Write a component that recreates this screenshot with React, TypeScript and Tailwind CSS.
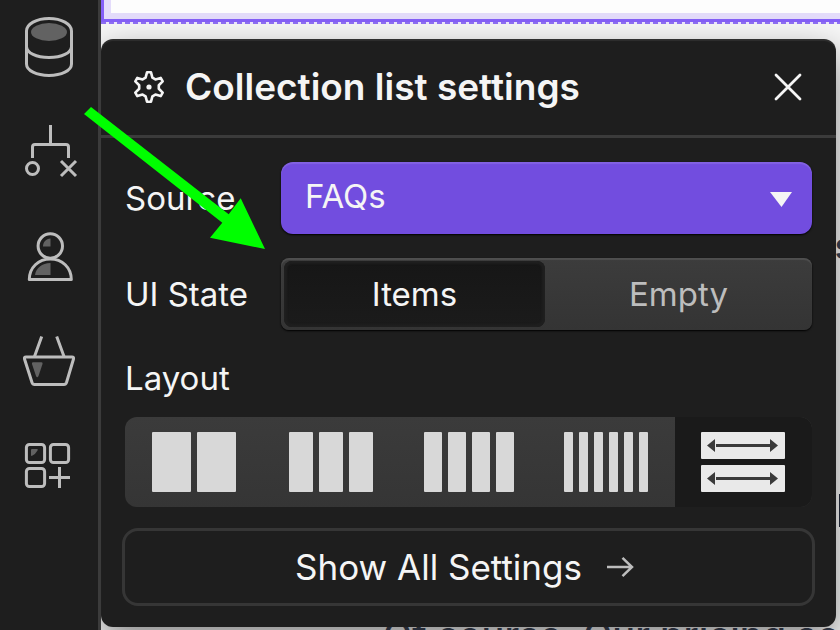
import { useState } from 'react';
import type { ReactNode } from 'react';

interface LayoutOption {
  id: string;
  label: string;
  icon: ReactNode;
}

function Columns({ count, width, total }: { count: number; width: number; total: number }) {
  return (
    <svg width={total} height="60" viewBox={`0 0 ${total} 60`} fill="#d8d8d8" aria-hidden="true">
      {Array.from({ length: count }, (_, i) => (
        <rect key={i} x={i * (width + 6)} width={width} height="60" rx="1" />
      ))}
    </svg>
  );
}

function Rows() {
  return (
    <svg width="84" height="60" viewBox="0 0 84 60" aria-hidden="true">
      {[0, 33].map(y => (
        <g key={y} transform={`translate(0 ${y})`}>
          <rect width="84" height="27" rx="1" fill="#e9e9e9" />
          <path d="M15 13.5H69" stroke="#3a3a3a" strokeWidth="3" />
          <path d="M14 7V20L6 13.5ZM69 7V20L77 13.5Z" fill="#3a3a3a" />
        </g>
      ))}
    </svg>
  );
}

const layouts: LayoutOption[] = [
  { id: 'two', label: 'Two columns', icon: <Columns count={2} width={39} total={84} /> },
  { id: 'three', label: 'Three columns', icon: <Columns count={3} width={24} total={84} /> },
  { id: 'four', label: 'Four columns', icon: <Columns count={4} width={18} total={90} /> },
  { id: 'six', label: 'Six columns', icon: <Columns count={6} width={9} total={84} /> },
  { id: 'rows', label: 'Rows', icon: <Rows /> },
];

const tools = [
  {
    label: 'CMS',
    icon: (
      <>
        <ellipse cx="30" cy="15" rx="18" ry="9" fill="#626262" stroke="none" />
        <path d="M7.5 14C7.5 7 17.5 1.5 30 1.5S52.5 7 52.5 14V47C52.5 53.5 42.5 58.5 30 58.5S7.5 53.5 7.5 47Z" />
        <path d="M7.5 29.5C7.5 36 17.5 40.5 30 40.5S52.5 36 52.5 29.5" />
      </>
    ),
  },
  {
    label: 'Logic',
    icon: (
      <>
        <path d="M31.5 3V22.5M13.5 36V25Q13.5 22.5 16 22.5H47Q49.5 22.5 49.5 25V36" />
        <circle cx="13.5" cy="46.5" r="6" />
        <path d="M42 39L57 54M57 39L42 54" />
      </>
    ),
  },
  {
    label: 'Users',
    icon: (
      <>
        <path d="M31.5 11.5V19.5H24C24 15 27 12 31.5 11.5ZM31.5 36V48H16C17 41 23 36 31.5 36Z" fill="#626262" stroke="none" />
        <circle cx="31.3" cy="19" r="12.2" />
        <path d="M10.3 52.6C10.3 40.5 19.5 32 31.3 32S52.3 40.5 52.3 52.6Z" />
      </>
    ),
  },
  {
    label: 'Ecommerce',
    icon: (
      <>
        <path d="M14 30.3H22.5Q24 30.3 23.5 32L19.5 44Q18.2 46.5 17 44L13 32Q12.5 30.3 14 30.3Z" fill="#626262" stroke="none" />
        <path d="M22.7 4.5L15.5 24.5M37.7 4.5L45 24.5" />
        <path d="M7 25H53Q55 25 54.5 27L47.5 50.5Q46.8 52.5 45 52.5H15.5Q13.7 52.5 13 50.5L5.5 27Q5 25 7 25Z" />
      </>
    ),
  },
  {
    label: 'Apps',
    icon: (
      <>
        <path d="M12 13Q12 12 13 12H18Q19.5 12 18.5 13.5Q16.5 17 13.5 18.5Q12 19.5 12 18Z" fill="#626262" stroke="none" />
        <rect x="7.4" y="7.4" width="18.2" height="18.2" rx="3" />
        <rect x="31.4" y="7.4" width="18.2" height="18.2" rx="3" />
        <rect x="7.4" y="31.4" width="18.2" height="18.2" rx="3" />
        <path d="M40.5 30V51M30 40.5H51" />
      </>
    ),
  },
];

function Sidebar() {
  return (
    <nav className="relative z-10 flex shrink-0 flex-col gap-[45px] border-r-3 border-[#3b3b3b] bg-[#1e1e1e] px-[19px] pt-[17px]">
      {tools.map(tool => (
        <button key={tool.label} type="button" aria-label={tool.label}>
          <svg width="60" height="60" viewBox="0 0 60 60" fill="none" stroke="#bdbdbd" strokeWidth="3" strokeLinejoin="round">
            {tool.icon}
          </svg>
        </button>
      ))}
    </nav>
  );
}

// Page being edited, mostly hidden behind the settings panel
function Canvas() {
  return (
    <div className="absolute inset-0 overflow-hidden bg-[#f7f7f7] text-[#3a4254]">
      <div className="h-[22px] border-b-3 border-l-3 border-[#8560f8] bg-[#e4dcfb] pb-[6px] pl-[7px]">
        <div className="h-full bg-[#fdfdfd]" />
      </div>
      <div className="h-[2px] bg-[repeating-linear-gradient(90deg,#8f6ff5_0_5px,#eee9fc_5px_8px)]" />
      <p className="absolute top-[222px] -right-[14px] text-[36px] leading-[48px] font-medium">s</p>
      <div className="absolute top-[494px] right-0 h-[33px] w-px bg-[#232a3a]" />
      <p className="absolute top-[611px] left-[282px] text-[38px] leading-[48px] font-medium whitespace-nowrap">
        Of course. Our pricing scales
      </p>
    </div>
  );
}

function SettingsPanel() {
  const [source, setSource] = useState('FAQs');
  const [uiState, setUiState] = useState('Items');
  const [layout, setLayout] = useState('rows');

  return (
    <section className="relative mt-[39px] mr-1 rounded-xl bg-[#1e1e1e] text-[33px] leading-[48px] text-[#f5f5f5] shadow-[0_14px_36px_rgba(0,0,0,0.45),inset_0_2px_1px_rgba(255,255,255,0.08)]">
      <header className="flex h-[99px] items-center border-b-3 border-[#3b3b3b] px-8">
        <svg width="32" height="34" viewBox="-16 -17 32 34" fill="none" stroke="#f5f5f5" strokeWidth="2.6" strokeLinejoin="round" aria-hidden="true">
          <path d="M-2 -14.7H2L3.4 -9.4L6.4 -7.6L11.7 -9.1L13.7 -5.6L9.8 -1.8V1.8L13.7 5.6L11.7 9.1L6.4 7.6L3.4 9.4L2 14.7H-2L-3.4 9.4L-6.4 7.6L-11.7 9.1L-13.7 5.6L-9.8 1.8V-1.8L-13.7 -5.6L-11.7 -9.1L-6.4 -7.6L-3.4 -9.4Z" />
          <circle r="2.6" fill="#f5f5f5" stroke="none" />
        </svg>
        <h2 className="ml-5 flex-1 text-[37px] font-semibold">Collection list settings</h2>
        <button type="button" aria-label="Close">
          <svg width="32" height="32" viewBox="0 0 32 32" stroke="#f5f5f5" strokeWidth="2.8" strokeLinecap="round">
            <path d="M4 4L28 28M28 4L4 28" />
          </svg>
        </button>
      </header>

      <div className="flex flex-col gap-6 px-6 pt-6">
        <div className="flex items-center">
          <label htmlFor="source" className="w-[156px]">Source</label>
          <div className="relative flex-1">
            <select
              id="source"
              value={source}
              onChange={e => setSource(e.target.value)}
              className="block h-[72px] w-full appearance-none rounded-xl bg-[#724ddf] px-6 pb-1 shadow-[0_1px_2px_#000,inset_0_2px_1px_rgba(255,255,255,0.12)]"
            >
              <option>FAQs</option>
            </select>
            <svg className="pointer-events-none absolute top-[30px] right-5" width="22" height="15" viewBox="0 0 22 15" fill="#f5f5f5" aria-hidden="true">
              <path d="M0 0H22L11.5 15Z" />
            </svg>
          </div>
        </div>

        <div className="flex items-center">
          <span id="ui-state" className="w-[156px]">UI State</span>
          <div
            role="group"
            aria-labelledby="ui-state"
            className="flex h-[72px] flex-1 gap-[3px] rounded-lg bg-linear-to-b from-[#3c3c3c] to-[#343434] p-[3px] shadow-[0_1px_2px_#000,inset_0_2px_1px_rgba(255,255,255,0.1)]"
          >
            {['Items', 'Empty'].map(state => (
              <button
                key={state}
                type="button"
                aria-pressed={uiState === state}
                onClick={() => setUiState(state)}
                className={
                  uiState === state
                    ? 'flex-1 rounded-lg bg-linear-to-b from-[#161616] to-[#1b1b1b] shadow-[inset_0_0_2px_3px_#1f1f1f]'
                    : 'flex-1 text-[#bdbdbd]'
                }
              >
                {state}
              </button>
            ))}
          </div>
        </div>

        <div>
          <h3 id="layout">Layout</h3>
          <div
            role="group"
            aria-labelledby="layout"
            className="mt-[15px] flex h-[90px] overflow-hidden rounded-xl bg-linear-to-b from-[#3b3b3b] to-[#353535]"
          >
            {layouts.map(option => (
              <button
                key={option.id}
                type="button"
                aria-label={option.label}
                aria-pressed={layout === option.id}
                onClick={() => setLayout(option.id)}
                className={`flex flex-1 items-center justify-center ${layout === option.id ? 'bg-[#1a1a1a]' : ''}`}
              >
                {option.icon}
              </button>
            ))}
          </div>
        </div>
      </div>

      <div className="px-[21px] pt-[21px] pb-[21px]">
        <button type="button" className="flex h-[78px] w-full items-center justify-center gap-6 rounded-2xl border-3 border-[#363636] pr-2 text-[35px]">
          Show All Settings
          <svg width="28" height="22" viewBox="0 0 28 22" fill="none" stroke="#bdbdbd" strokeWidth="2.5" aria-hidden="true">
            <path d="M1 11H26M16.5 1.8L26 11L16.5 20.2" />
          </svg>
        </button>
      </div>
    </section>
  );
}

export default function App() {
  return (
    <div className="relative flex min-h-screen overflow-hidden font-['Inter',sans-serif]">
      <Sidebar />
      <main className="relative min-w-0 flex-1">
        <Canvas />
        <SettingsPanel />
      </main>
      {/* annotation arrow */}
      <svg className="pointer-events-none absolute top-[107px] left-[84px] z-20" width="182" height="143" viewBox="84 107 182 143" fill="#00ff00" aria-hidden="true">
        <path d="M91 107L228.7 214.3L240.7 198.3L265 249L210 237.7L222.3 222.7L84 114Z" />
      </svg>
    </div>
  );
}
